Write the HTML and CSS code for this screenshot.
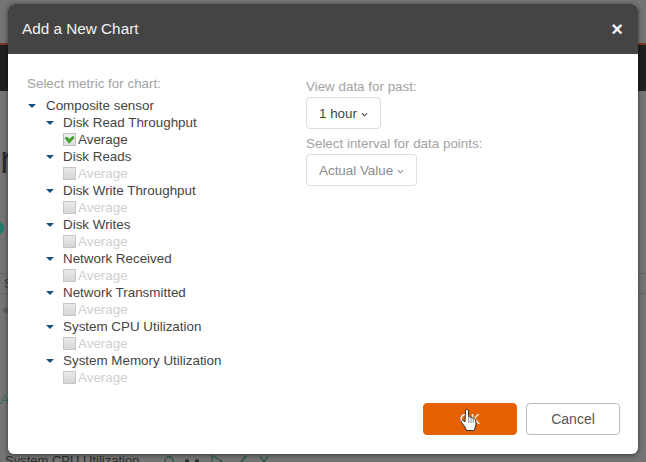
FILE: index.html
```html
<!DOCTYPE html>
<html lang="en">
<head>
    <meta charset="UTF-8">
    <meta name="viewport" content="width=device-width, initial-scale=1.0">
    <title>Add a New Chart</title>
    <link rel="stylesheet" href="styles.css">
</head>
<body>
    <!-- page behind the dialog -->
    <div class="page">
        <div class="topbar"></div>
        <div class="heading">r</div>
        <div class="status-dot"></div>
        <div class="page-line">S</div>
        <div class="small-dot"></div>
        <div class="teal-text">A</div>
        <div class="page-row">
            <span>System CPU Utilization</span>
            <svg class="row-icons" viewBox="0 0 106 12">
                <circle cx="5" cy="6" r="4" fill="none" stroke="#2c5a50" stroke-width="1.500"/>
                <circle cx="23" cy="6" r="2" fill="#23302d"/>
                <circle cx="33" cy="6" r="2" fill="#23302d"/>
                <path d="M48 1 L58 6 L48 11 Z" fill="none" stroke="#2c5a50" stroke-width="1.200"/>
                <path d="M74 11 L82 1" stroke="#2c5a50" stroke-width="2"/>
                <path d="M96 2 L104 10 M104 2 L96 10" stroke="#2c5a50" stroke-width="1.500"/>
            </svg>
        </div>
    </div>

    <div class="modal">
        <div class="modal-header">
            <h1>Add a New Chart</h1>
            <span class="close">&#215;</span>
        </div>
        <div class="modal-body">
            <div class="metrics">
                <p class="hint">Select metric for chart:</p>
                <div class="row top"><span class="caret"></span>Composite sensor</div>

                <div class="row sub"><span class="caret"></span>Disk Read Throughput</div>
                <div class="row leaf"><span class="check on"><svg viewBox="0 0 12 12"><path d="M0.500 4 L3.500 3 L5.500 5.500 L10 2 L11.500 4 L5.500 10.500 Z" fill="#3da32a"/></svg></span>Average</div>

                <div class="row sub"><span class="caret"></span>Disk Reads</div>
                <div class="row leaf off"><span class="check"></span>Average</div>

                <div class="row sub"><span class="caret"></span>Disk Write Throughput</div>
                <div class="row leaf off"><span class="check"></span>Average</div>

                <div class="row sub"><span class="caret"></span>Disk Writes</div>
                <div class="row leaf off"><span class="check"></span>Average</div>

                <div class="row sub"><span class="caret"></span>Network Received</div>
                <div class="row leaf off"><span class="check"></span>Average</div>

                <div class="row sub"><span class="caret"></span>Network Transmitted</div>
                <div class="row leaf off"><span class="check"></span>Average</div>

                <div class="row sub"><span class="caret"></span>System CPU Utilization</div>
                <div class="row leaf off"><span class="check"></span>Average</div>

                <div class="row sub"><span class="caret"></span>System Memory Utilization</div>
                <div class="row leaf off"><span class="check"></span>Average</div>
            </div>
            <div class="options">
                <p class="hint">View data for past:</p>
                <button class="select">1 hour<svg class="chev" viewBox="0 0 8 5"><path d="M1 1 L4 4 L7 1" fill="none" stroke="currentColor" stroke-width="1.200"/></svg></button>
                <p class="hint">Select interval for data points:</p>
                <button class="select muted">Actual Value<svg class="chev" viewBox="0 0 8 5"><path d="M1 1 L4 4 L7 1" fill="none" stroke="currentColor" stroke-width="1.200"/></svg></button>
            </div>
        </div>
        <div class="modal-footer">
            <button class="btn primary">OK</button>
            <button class="btn">Cancel</button>
            <!-- mouse pointer sitting on the OK button -->
            <svg class="cursor" viewBox="0 0 18 24">
                <path d="M5.500 2 C6.500 1 8.500 1.500 8.500 3 L8.700 9 L10.500 9 L13 10 L15.500 11.500 L16 16 L15 20 L14 22.500 L6.500 22.500 L5 19 L1.500 14.500 C1 13 2.500 11.500 4 13 L5 14 Z" fill="#fff" stroke="#333" stroke-width="1"/>
                <path d="M8.700 10 V15 M11 10 V15 M13.200 11 V15" stroke="#777" stroke-width="0.800" fill="none"/>
            </svg>
        </div>
    </div>
</body>
</html>
```

FILE: styles.css
```css
* {
    box-sizing: border-box;
}
html, body {
    margin: 0;
    height: 100%;
}
body {
    position: relative;
    overflow: hidden;
    background: #747474;
    font-family: "Liberation Sans", Arial, sans-serif;
    font-size: 13.400px;
    color: #444;
}
.page {
    height: 100%;
    display: flex;
    flex-direction: column;
    padding-top: 43px;
}
.topbar {
    height: 48px;
    background: #1f1f1f;
    border-top: 2px solid #803a22;
}
.heading {
    margin-top: 47px;
    font-size: 38px;
    line-height: 44px;
    color: #2c2c2c;
}
.status-dot {
    width: 14px;
    height: 14px;
    margin: 39px 0 0 -10px;
    border-radius: 50%;
    background: #1f7a6c;
}
.page-line {
    margin-top: 38px;
    height: 21px;
    padding-left: 4px;
    line-height: 19px;
    border-top: 1px solid #666;
    border-bottom: 1px solid #666;
    color: #3c3c3c;
}
.small-dot {
    width: 5px;
    height: 5px;
    margin: 14px 0 0 3px;
    border-radius: 50%;
    background: #5e5e5e;
}
.teal-text {
    margin-top: 79px;
    line-height: 16px;
    color: #2f6f66;
}
.page-row {
    margin-top: auto;
    display: flex;
    height: 8px;
    padding-left: 5px;
    font-size: 13px;
    line-height: 14px;
    color: #2a2a2a;
}
.row-icons {
    flex: none;
    width: 106px;
    height: 12px;
    margin: 1px 0 0 25px;
}

.modal {
    position: absolute;
    left: 8px;
    top: 4px;
    width: 630px;
    height: 450px;
    display: flex;
    flex-direction: column;
    background: #fff;
    border-radius: 6px;
    box-shadow: 0 1px 5px rgba(0, 0, 0, 0.55);
    overflow: hidden;
}
.modal-header {
    height: 50px;
    flex: none;
    display: flex;
    align-items: center;
    justify-content: space-between;
    padding: 0 15px 0 14px;
    background: #444445;
}
.modal-header h1 {
    margin: 0;
    font-size: 15.300px;
    font-weight: normal;
    color: #f2f2f2;
}
.close {
    font-size: 20px;
    font-weight: bold;
    line-height: 1;
    color: #f5f5f5;
}
.modal-body {
    flex: 1;
    display: flex;
    padding: 22px 19px 0;
}
.metrics {
    width: 279px;
}
.hint {
    margin: 0;
    color: #a3a3a3;
    line-height: 18px;
}
.metrics .hint {
    margin-bottom: 5px;
    line-height: 16px;
}
.row {
    display: flex;
    align-items: center;
    height: 17px;
    color: #444;
}
.sub {
    padding-left: 18px;
}
.leaf {
    padding-left: 36px;
}
.off {
    color: #cfcfcf;
}
.caret {
    width: 0;
    height: 0;
    margin-right: 9px;
    margin-left: 1px;
    border-left: 4px solid transparent;
    border-right: 4px solid transparent;
    border-top: 4px solid #1c4f78;
}
.top .caret {
    margin-right: 10px;
}
.check {
    width: 13px;
    height: 13px;
    margin-right: 2px;
    background: linear-gradient(#eaeaea, #d6d6d6);
    border: 1px solid #c6c6c6;
}
.check.on {
    background: linear-gradient(#f0f0f0, #dcdcdc);
    border-color: #bdbdbd;
}
.check svg {
    display: block;
    width: 11px;
    height: 11px;
}
.options {
    padding-top: 2px;
}
.select {
    display: block;
    height: 32px;
    margin: 1px 0 6px;
    padding: 0 12px;
    background: #fff;
    border: 1px solid #ddd;
    border-radius: 4px;
    font: inherit;
    color: #444;
}
.select.muted {
    color: #8c8c8c;
}
.chev {
    width: 7px;
    height: 5px;
    margin-left: 4px;
    vertical-align: 1px;
}
.modal-footer {
    position: relative;
    flex: none;
    display: flex;
    justify-content: flex-end;
    gap: 9px;
    padding: 0 18px 19px;
}
.btn {
    width: 94px;
    height: 32px;
    background: #fff;
    border: 1px solid #bbb;
    border-radius: 4px;
    font: inherit;
    font-size: 14px;
    color: #555;
}
.btn.primary {
    background: #e46000;
    border-color: #e46000;
    color: #fff;
}
.cursor {
    position: absolute;
    left: 452px;
    top: 5px;
    width: 18px;
    height: 24px;
}
```
